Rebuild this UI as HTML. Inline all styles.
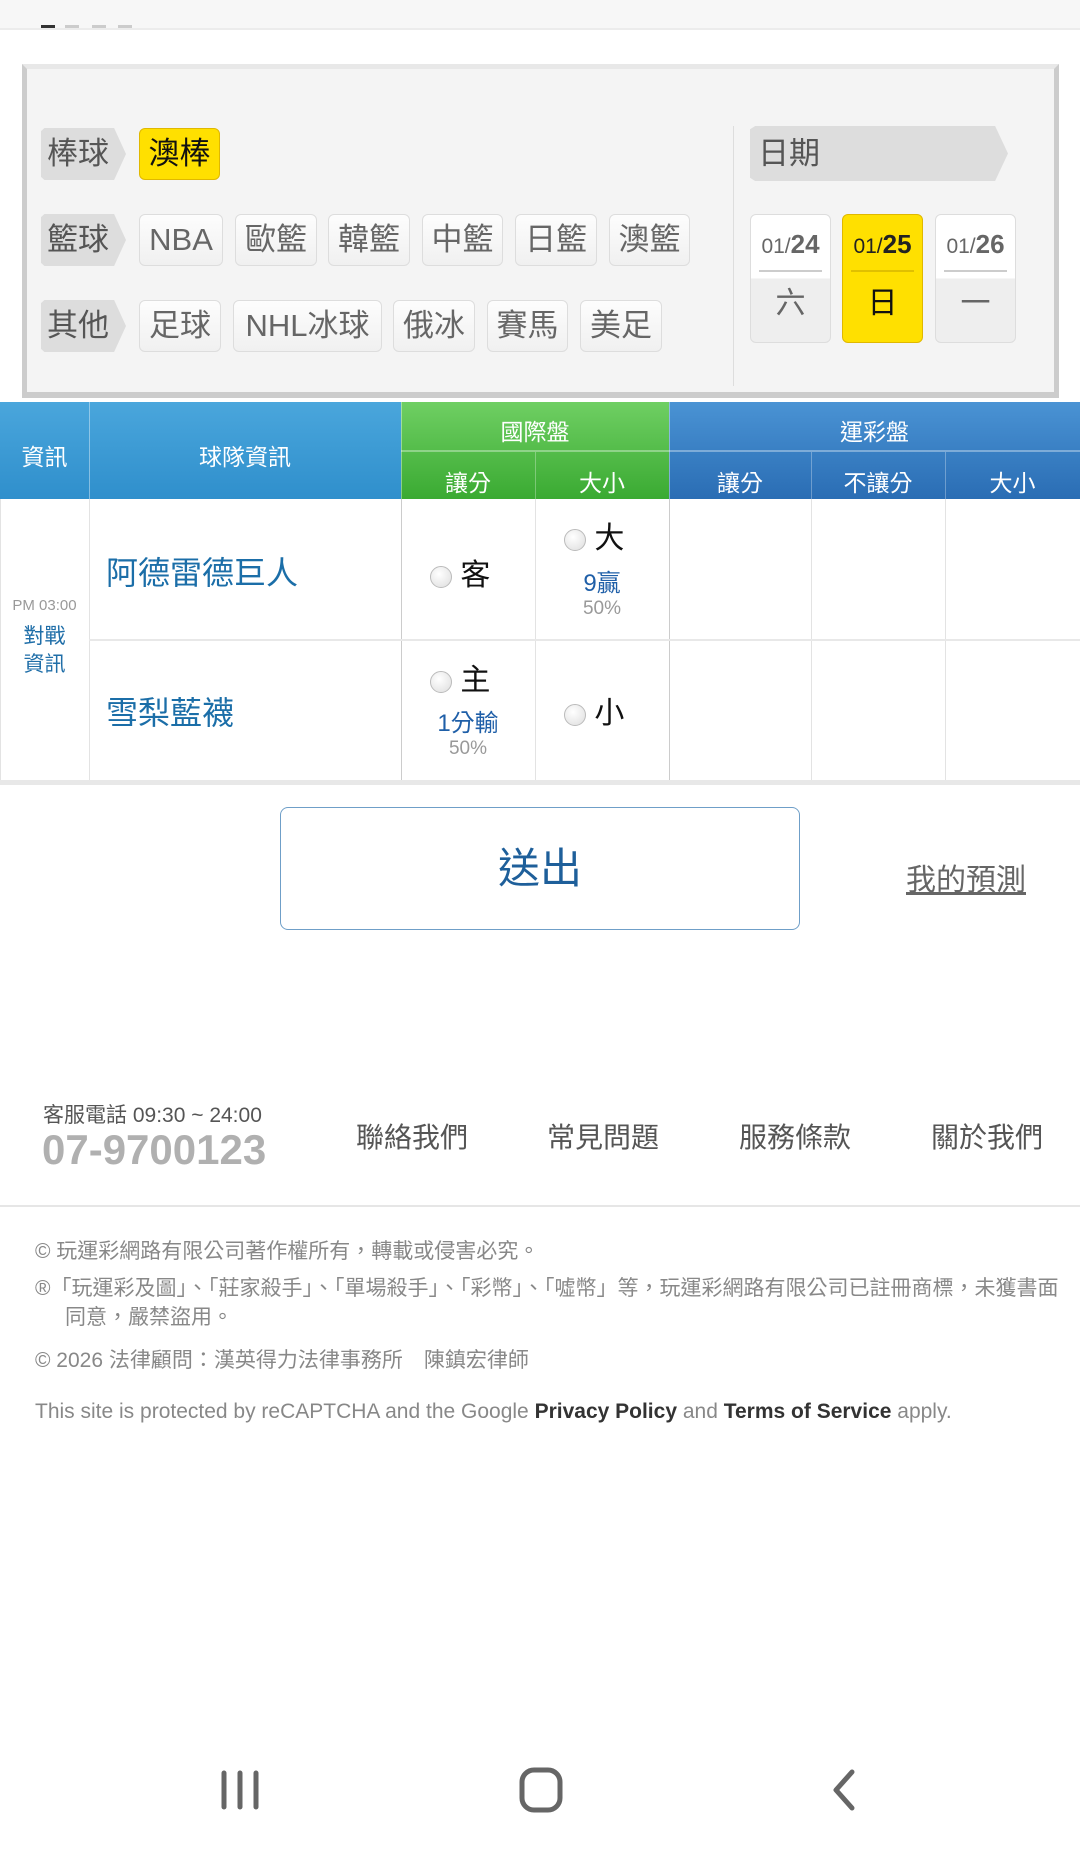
<!DOCTYPE html>
<html><head><meta charset="utf-8">
<style>
*{margin:0;padding:0;box-sizing:border-box}
body{width:1080px;height:1853px;position:relative;background:#fff;font-family:"Liberation Sans","Noto Sans CJK TC",sans-serif;overflow:hidden}
.a{position:absolute}
.tag{position:absolute;left:41px;width:85px;height:52px;background:#ddd;color:#555;font-size:31px;line-height:52px;padding-left:6px;clip-path:polygon(0 6%,4% 0,86% 0,100% 50%,86% 100%,4% 100%,0 94%);}
.btn{position:absolute;height:52px;background:linear-gradient(#fdfdfd,#f0f0f0);border:1px solid #ddd;border-radius:6px;color:#666;font-size:31px;line-height:50px;text-align:center}
.hd{position:absolute;color:#fff;font-size:23px;text-align:center}
.radio{display:inline-block;width:22px;height:22px;border-radius:50%;border:1px solid #bbb;background:radial-gradient(circle at 40% 35%,#fff,#ddd);vertical-align:middle}
.vl{position:absolute;width:1px;background:#e3e3e3}
.foot{position:absolute;left:35px;color:#888;font-size:21px}
</style></head><body>
<div class="a" style="left:0;top:0;width:1080px;height:30px;background:#f7f7f7;border-bottom:2px solid #ececec"></div>
<div class="a" style="left:41px;top:25px;width:14px;height:3px;background:#333"></div>
<div class="a" style="left:65px;top:25px;width:14px;height:3px;background:#ccc"></div>
<div class="a" style="left:92px;top:25px;width:14px;height:3px;background:#ccc"></div>
<div class="a" style="left:118px;top:25px;width:14px;height:3px;background:#ccc"></div>

<div class="a" style="left:22px;top:64px;width:1037px;height:334px;background:#f4f4f4;border:1px solid #ddd;border-top:5px solid #e8e8e8;border-left:5px solid #ccc;border-right:5px solid #ccc;border-bottom:6px solid #ccc"></div>

<div class="tag" style="top:128px">棒球</div>
<div class="btn" style="left:139px;top:128px;width:81px;background:#ffe000;border-color:#e0b800;color:#111">澳棒</div>

<div class="tag" style="top:214px">籃球</div>
<div class="btn" style="left:139px;top:214px;width:84px">NBA</div>
<div class="btn" style="left:235px;top:214px;width:82px">歐籃</div>
<div class="btn" style="left:328px;top:214px;width:82px">韓籃</div>
<div class="btn" style="left:422px;top:214px;width:81px">中籃</div>
<div class="btn" style="left:515px;top:214px;width:82px">日籃</div>
<div class="btn" style="left:609px;top:214px;width:81px">澳籃</div>

<div class="tag" style="top:300px">其他</div>
<div class="btn" style="left:139px;top:300px;width:82px">足球</div>
<div class="btn" style="left:233px;top:300px;width:149px">NHL冰球</div>
<div class="btn" style="left:393px;top:300px;width:82px">俄冰</div>
<div class="btn" style="left:487px;top:300px;width:81px">賽馬</div>
<div class="btn" style="left:580px;top:300px;width:82px">美足</div>

<div class="a" style="left:733px;top:126px;width:1px;height:260px;background:#ddd"></div>
<div class="tag" style="left:750px;top:126px;width:258px;height:55px;line-height:55px;padding-left:8px;clip-path:polygon(0 6%,2% 0,95% 0,100% 50%,95% 100%,2% 100%,0 94%)">日期</div>

<div class="a" style="left:750px;top:214px;width:81px;height:129px;border:1px solid #ddd;border-radius:6px;background:linear-gradient(#fff 0,#fff 50%,#eee 50%)">
 <div style="text-align:center;color:#666;font-size:21px;margin-top:14px">01/<b style="font-size:26px">24</b></div>
 <div style="margin:10px 8px 0;height:2px;background:#ccc"></div>
 <div style="text-align:center;color:#666;font-size:30px;margin-top:6px">六</div></div>
<div class="a" style="left:842px;top:214px;width:81px;height:129px;border:1px solid #e0b800;border-radius:6px;background:#ffe000">
 <div style="text-align:center;color:#222;font-size:21px;margin-top:14px">01/<b style="font-size:26px">25</b></div>
 <div style="margin:10px 8px 0;height:2px;background:#e0c000"></div>
 <div style="text-align:center;color:#111;font-size:30px;margin-top:6px">日</div></div>
<div class="a" style="left:935px;top:214px;width:81px;height:129px;border:1px solid #ddd;border-radius:6px;background:linear-gradient(#fff 0,#fff 50%,#eee 50%)">
 <div style="text-align:center;color:#666;font-size:21px;margin-top:14px">01/<b style="font-size:26px">26</b></div>
 <div style="margin:10px 8px 0;height:2px;background:#ccc"></div>
 <div style="text-align:center;color:#666;font-size:30px;margin-top:6px">一</div></div>

<div class="a" style="left:0;top:402px;width:401px;height:97px;background:linear-gradient(#4aa6dc,#2f8fcc)"></div>
<div class="a" style="left:401px;top:402px;width:268px;height:97px;background:linear-gradient(#6fcf63,#3aaa32)"></div>
<div class="a" style="left:669px;top:402px;width:411px;height:97px;background:linear-gradient(#4a93d4,#2a6db4)"></div>
<div class="a" style="left:401px;top:450px;width:679px;height:2px;background:rgba(255,255,255,.35)"></div>
<div class="a" style="left:89px;top:402px;width:1px;height:97px;background:rgba(255,255,255,.4)"></div>
<div class="a" style="left:401px;top:402px;width:1px;height:97px;background:rgba(255,255,255,.4)"></div>
<div class="a" style="left:535px;top:452px;width:1px;height:47px;background:rgba(255,255,255,.3)"></div>
<div class="a" style="left:669px;top:402px;width:1px;height:97px;background:rgba(255,255,255,.4)"></div>
<div class="a" style="left:811px;top:452px;width:1px;height:47px;background:rgba(255,255,255,.3)"></div>
<div class="a" style="left:945px;top:452px;width:1px;height:47px;background:rgba(255,255,255,.3)"></div>
<div class="hd" style="left:0;width:89px;top:438px">資訊</div>
<div class="hd" style="left:89px;width:312px;top:438px">球隊資訊</div>
<div class="hd" style="left:401px;width:268px;top:413px">國際盤</div>
<div class="hd" style="left:669px;width:411px;top:413px">運彩盤</div>
<div class="hd" style="left:401px;width:134px;top:464px">讓分</div>
<div class="hd" style="left:535px;width:134px;top:464px">大小</div>
<div class="hd" style="left:669px;width:142px;top:464px">讓分</div>
<div class="hd" style="left:811px;width:134px;top:464px">不讓分</div>
<div class="hd" style="left:945px;width:135px;top:464px">大小</div>

<div class="a" style="left:0;top:499px;width:1080px;height:284px;border-left:1px solid #e3e3e3"></div>
<div class="vl" style="left:89px;top:499px;height:282px"></div>
<div class="vl" style="left:401px;top:499px;height:282px;background:#ccc"></div>
<div class="vl" style="left:535px;top:499px;height:282px"></div>
<div class="vl" style="left:669px;top:499px;height:282px;background:#ccc"></div>
<div class="vl" style="left:811px;top:499px;height:282px"></div>
<div class="vl" style="left:945px;top:499px;height:282px"></div>
<div class="a" style="left:89px;top:639px;width:991px;height:2px;background:#e8e8e8"></div>
<div class="a" style="left:0;top:780px;width:1080px;height:5px;background:#e8e8e8"></div>

<div class="a" style="left:0;width:89px;top:597px;text-align:center;color:#999;font-size:15px">PM 03:00</div>
<div class="a" style="left:0;width:89px;top:623px;text-align:center;color:#1f6ea8;font-size:21px;line-height:28px">對戰<br>資訊</div>
<div class="a" style="left:106px;top:548px;color:#1b6ea8;font-size:32px">阿德雷德巨人</div>
<div class="a" style="left:106px;top:688px;color:#1b6ea8;font-size:32px">雪梨藍襪</div>

<div class="a" style="left:430px;top:550px;font-size:30px;color:#111"><span class="radio"></span> 客</div>
<div class="a" style="left:564px;top:513px;font-size:30px;color:#111"><span class="radio"></span> 大</div>
<div class="a" style="left:535px;width:134px;top:563px;text-align:center;color:#1f5fa8;font-size:24px">9贏</div>
<div class="a" style="left:535px;width:134px;top:598px;text-align:center;color:#999;font-size:19px">50%</div>

<div class="a" style="left:430px;top:655px;font-size:30px;color:#111"><span class="radio"></span> 主</div>
<div class="a" style="left:401px;width:134px;top:703px;text-align:center;color:#1f5fa8;font-size:24px">1分輸</div>
<div class="a" style="left:401px;width:134px;top:738px;text-align:center;color:#999;font-size:19px">50%</div>
<div class="a" style="left:564px;top:688px;font-size:30px;color:#111"><span class="radio"></span> 小</div>

<div class="a" style="left:280px;top:807px;width:520px;height:123px;border:1px solid #6f9fc8;border-radius:8px;text-align:center;line-height:121px;color:#1e5f9a;font-size:42px">送出</div>
<div class="a" style="left:906px;top:855px;color:#666;font-size:30px;text-decoration:underline">我的預測</div>

<div class="a" style="left:43px;top:1099px;color:#555;font-size:21px">客服電話 09:30 ~ 24:00</div>
<div class="a" style="left:42px;top:1126px;color:#b0b0b0;font-size:42px;font-weight:bold">07-9700123</div>
<div class="a" style="left:356px;top:1116px;color:#555;font-size:28px">聯絡我們</div>
<div class="a" style="left:547px;top:1116px;color:#555;font-size:28px">常見問題</div>
<div class="a" style="left:739px;top:1116px;color:#555;font-size:28px">服務條款</div>
<div class="a" style="left:931px;top:1116px;color:#555;font-size:28px">關於我們</div>
<div class="a" style="left:0;top:1205px;width:1080px;height:2px;background:#e6e6e6"></div>

<div class="foot" style="top:1235px">© 玩運彩網路有限公司著作權所有，轉載或侵害必究。</div>
<div class="foot" style="top:1274px;width:1038px;line-height:29px;padding-left:30px;text-indent:-30px">®「玩運彩及圖」、「莊家殺手」、「單場殺手」、「彩幣」、「噓幣」等，玩運彩網路有限公司已註冊商標，未獲書面同意，嚴禁盜用。</div>
<div class="foot" style="top:1344px">© 2026 法律顧問：漢英得力法律事務所　陳鎮宏律師</div>
<div class="foot" style="top:1400px">This site is protected by reCAPTCHA and the Google <b style="color:#333">Privacy Policy</b> and <b style="color:#333">Terms of Service</b> apply.</div>

<svg class="a" style="left:0;top:1760px" width="1080" height="70">
<g stroke="#666" stroke-width="5" fill="none" stroke-linecap="round" stroke-linejoin="round">
<line x1="224" y1="13" x2="224" y2="47"/><line x1="240" y1="13" x2="240" y2="47"/><line x1="256" y1="13" x2="256" y2="47"/>
<rect x="522" y="10" width="38" height="40" rx="12"/>
<polyline points="852,12 836,30 852,48"/>
</g></svg>
</body></html>
